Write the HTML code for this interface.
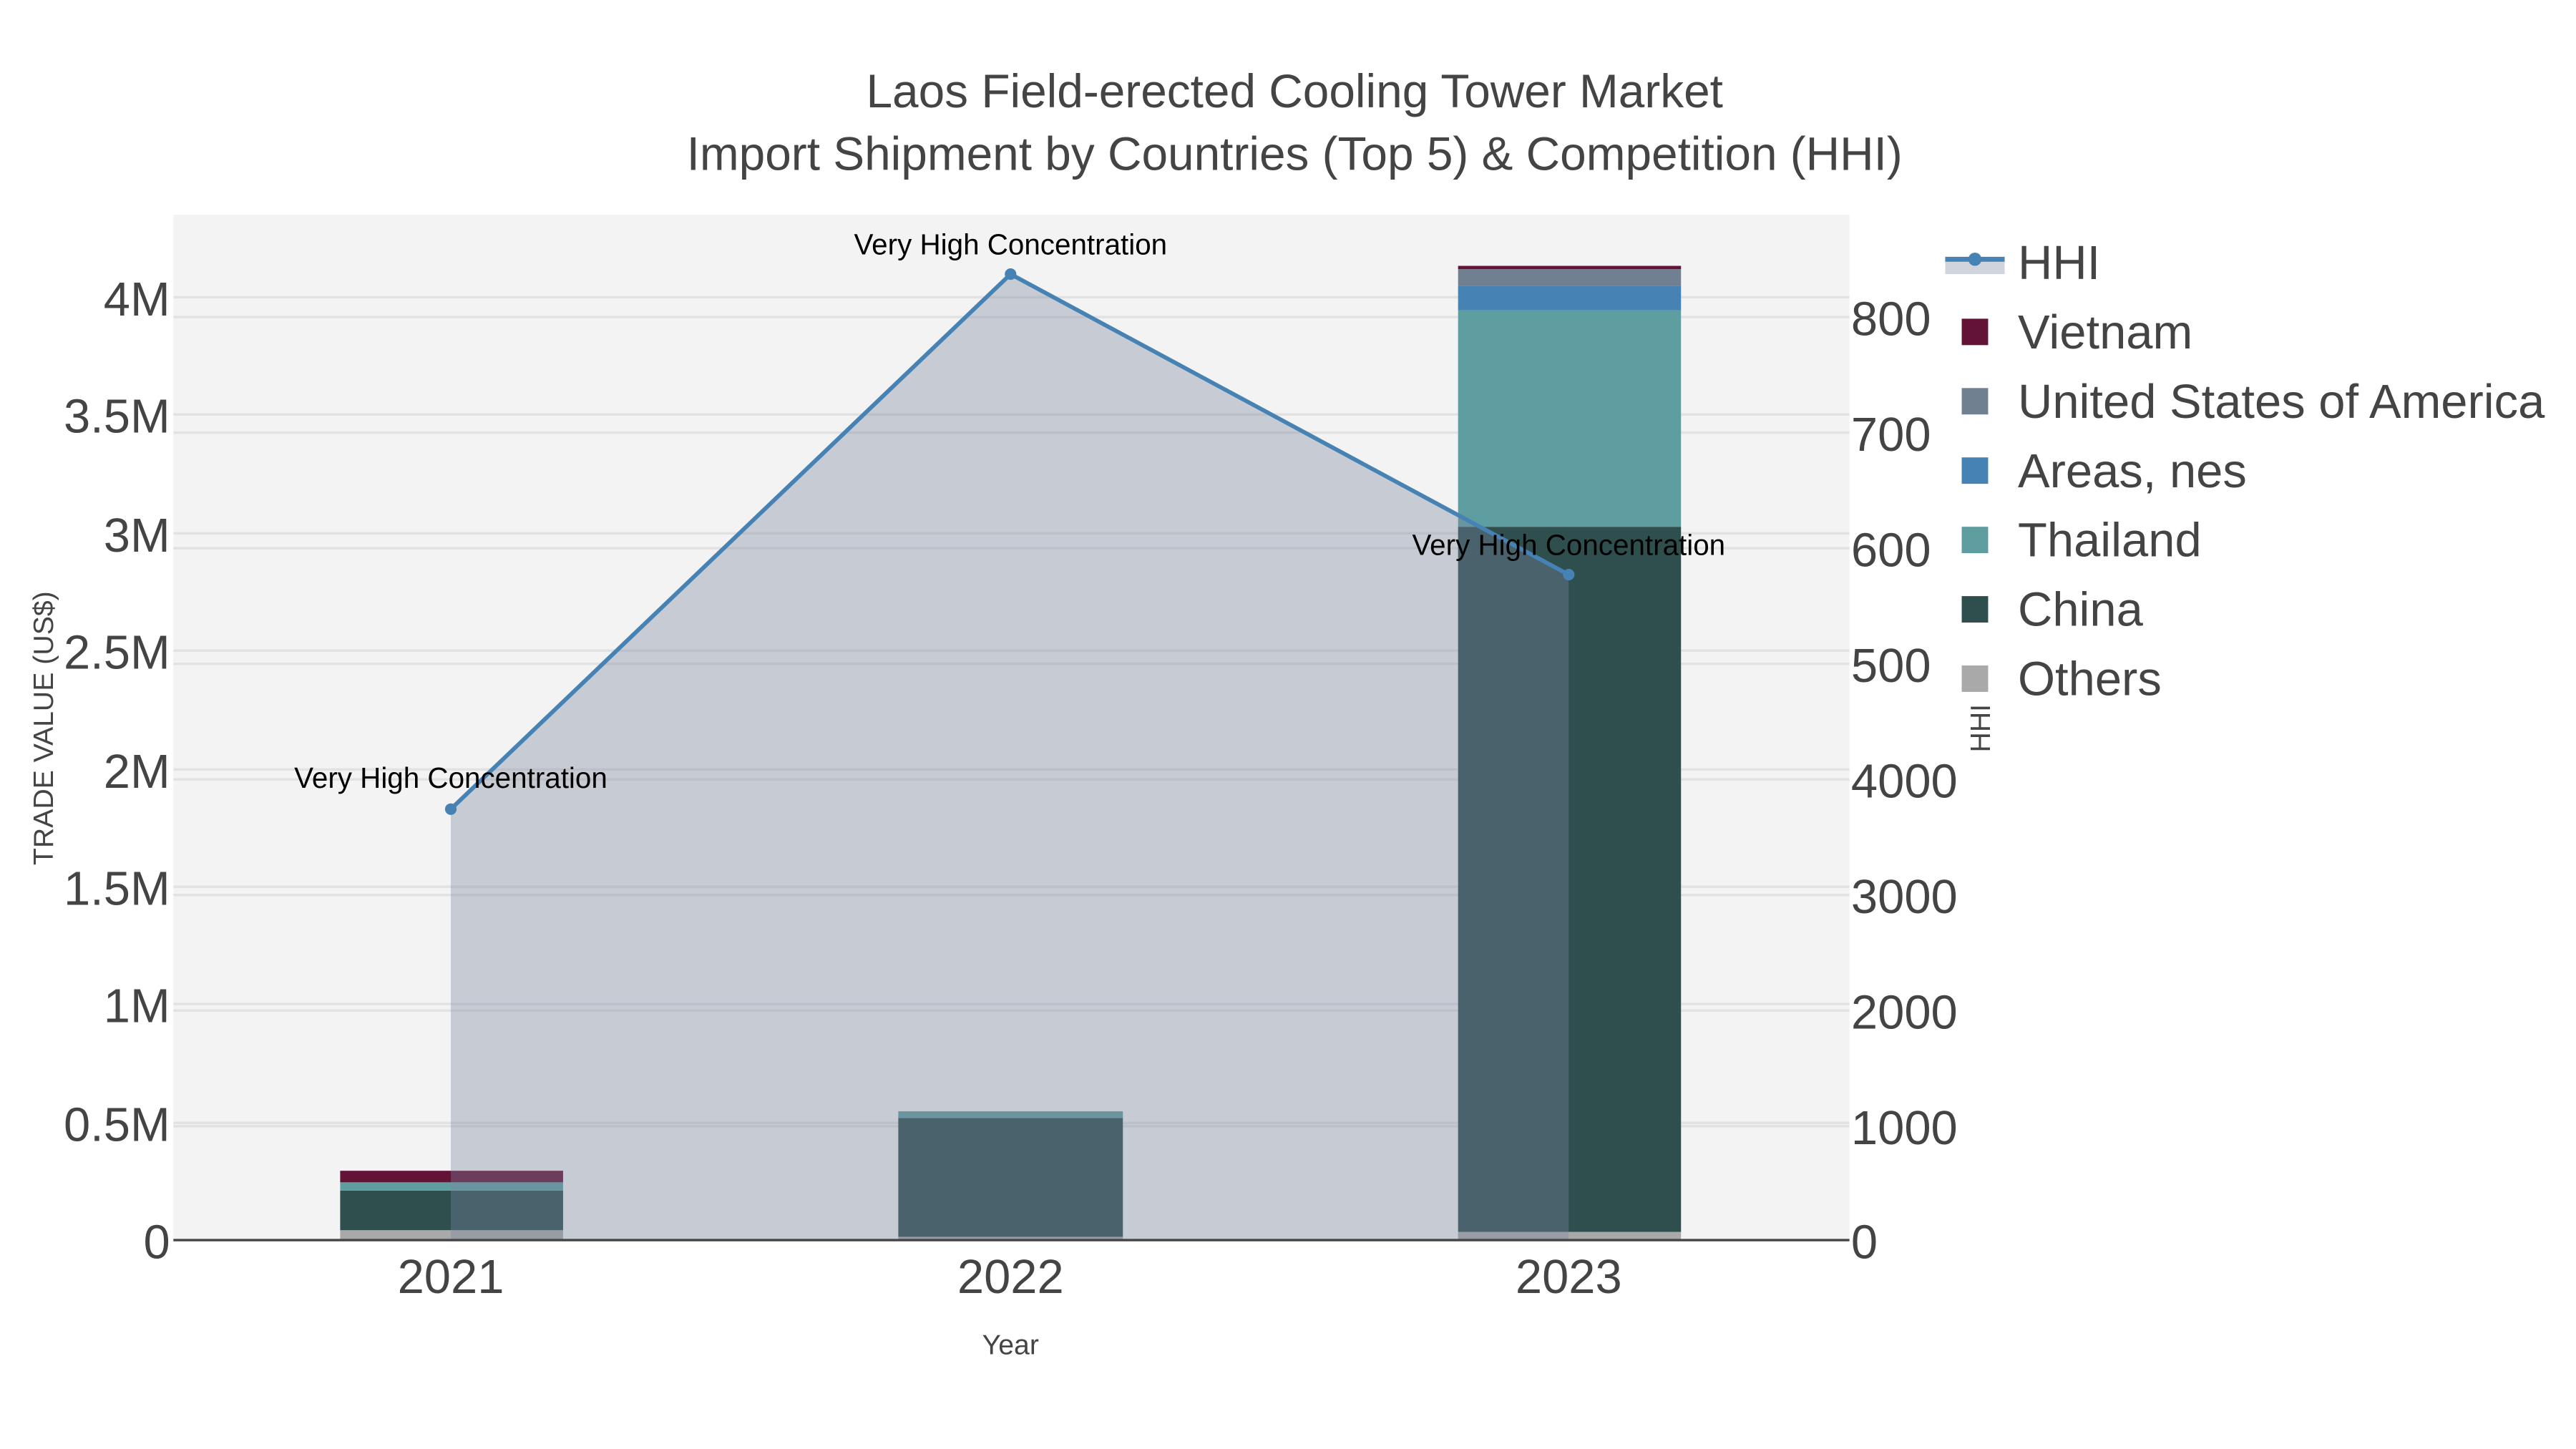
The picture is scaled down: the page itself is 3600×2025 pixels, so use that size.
<!DOCTYPE html>
<html><head><meta charset="utf-8"><style>
html,body{margin:0;padding:0;background:#fff;}
svg{display:block;}
text{font-family:"Liberation Sans",Arial,sans-serif;}
</style></head><body>
<svg width="3600" height="2025" viewBox="0 0 1560 877.5" xmlns="http://www.w3.org/2000/svg">
<rect x="0" y="0" width="1560" height="877.5" fill="#fff"/>
<rect x="105" y="130" width="1015" height="621" fill="#f3f3f3"/>
<g stroke="#e2e2e2" stroke-width="1.5">
<line x1="105" y1="680" x2="1120" y2="680"/><line x1="105" y1="608" x2="1120" y2="608"/>
<line x1="105" y1="537" x2="1120" y2="537"/><line x1="105" y1="466" x2="1120" y2="466"/>
<line x1="105" y1="394" x2="1120" y2="394"/><line x1="105" y1="323" x2="1120" y2="323"/>
<line x1="105" y1="251" x2="1120" y2="251"/><line x1="105" y1="180" x2="1120" y2="180"/>
<line x1="105" y1="682" x2="1120" y2="682"/><line x1="105" y1="612" x2="1120" y2="612"/>
<line x1="105" y1="542" x2="1120" y2="542"/><line x1="105" y1="472" x2="1120" y2="472"/>
<line x1="105" y1="402" x2="1120" y2="402"/><line x1="105" y1="332" x2="1120" y2="332"/>
<line x1="105" y1="262" x2="1120" y2="262"/><line x1="105" y1="192" x2="1120" y2="192"/>
</g>
<rect x="206" y="745" width="135" height="6" fill="#a9a9a9"/>
<rect x="206" y="721" width="135" height="24" fill="#2f4f4f"/>
<rect x="206" y="716" width="135" height="5" fill="#5f9ea0"/>
<rect x="206" y="709" width="135" height="7" fill="#631336"/>
<rect x="544" y="749" width="136" height="2" fill="#a9a9a9"/>
<rect x="544" y="677" width="136" height="72" fill="#2f4f4f"/>
<rect x="544" y="673" width="136" height="4" fill="#5f9ea0"/>
<rect x="883" y="746" width="135" height="5" fill="#a9a9a9"/>
<rect x="883" y="319" width="135" height="427" fill="#2f4f4f"/>
<rect x="883" y="188" width="135" height="131" fill="#5f9ea0"/>
<rect x="883" y="173" width="135" height="15" fill="#4682b4"/>
<rect x="883" y="163" width="135" height="10" fill="#708090"/>
<rect x="883" y="161" width="135" height="2" fill="#631336"/>
<polygon points="273,490 612,166 950,348 950,751 273,751" fill="rgb(123,134,159)" fill-opacity="0.36"/>
<polyline points="273,490 612,166 950,348" fill="none" stroke="#4682b4" stroke-width="2.5"/>
<circle cx="273" cy="490" r="3.5" fill="#4682b4"/><circle cx="612" cy="166" r="3.5" fill="#4682b4"/><circle cx="950" cy="348" r="3.5" fill="#4682b4"/>
<line x1="105" y1="751" x2="1120" y2="751" stroke="#444" stroke-width="1.5"/>
<g font-size="17.5" fill="#000" text-anchor="middle">
<text x="273" y="477">Very High Concentration</text>
<text x="612" y="154">Very High Concentration</text>
<text x="950" y="336">Very High Concentration</text>
</g>
<g font-size="28.5" fill="#444" text-anchor="middle">
<text x="784" y="65">Laos Field-erected Cooling Tower Market</text>
<text x="784" y="103">Import Shipment by Countries (Top 5) &amp; Competition (HHI)</text>
</g>
<g font-size="29" fill="#444" text-anchor="end">
<text x="103" y="762">0</text><text x="103" y="691">0.5M</text><text x="103" y="619">1M</text>
<text x="103" y="548">1.5M</text><text x="103" y="477">2M</text><text x="103" y="405">2.5M</text>
<text x="103" y="334">3M</text><text x="103" y="262">3.5M</text><text x="103" y="191">4M</text>
</g>
<g font-size="29" fill="#444">
<text x="1121" y="762">0</text><text x="1121" y="693">1000</text><text x="1121" y="623">2000</text>
<text x="1121" y="553">3000</text><text x="1121" y="483">4000</text><text x="1121" y="413">500</text>
<text x="1121" y="343">600</text><text x="1121" y="273">700</text><text x="1121" y="203">800</text>
</g>
<g font-size="29" fill="#444" text-anchor="middle">
<text x="273" y="783">2021</text><text x="612" y="783">2022</text><text x="950" y="783">2023</text>
</g>
<text x="612" y="820" font-size="17" fill="#444" text-anchor="middle">Year</text>
<text transform="translate(32,441) rotate(-90)" font-size="17" fill="#444" text-anchor="middle">TRADE VALUE (US$)</text>
<text transform="translate(1205,441) rotate(-90)" font-size="17" fill="#444" text-anchor="middle">HHI</text>
<rect x="1178" y="158" width="36" height="8" fill="#d0d4dc"/>
<line x1="1178" y1="157" x2="1214" y2="157" stroke="#4682b4" stroke-width="3"/>
<circle cx="1196" cy="157" r="4" fill="#4682b4"/>
<rect x="1188" y="193" width="16" height="16" fill="#631336"/>
<rect x="1188" y="235" width="16" height="16" fill="#708090"/>
<rect x="1188" y="277" width="16" height="16" fill="#4682b4"/>
<rect x="1188" y="319" width="16" height="16" fill="#5f9ea0"/>
<rect x="1188" y="361" width="16" height="16" fill="#2f4f4f"/>
<rect x="1188" y="403" width="16" height="16" fill="#a9a9a9"/>
<g font-size="29" fill="#444">
<text x="1222" y="169">HHI</text><text x="1222" y="211">Vietnam</text>
<text x="1222" y="253">United States of America</text><text x="1222" y="295">Areas, nes</text>
<text x="1222" y="337">Thailand</text><text x="1222" y="379">China</text><text x="1222" y="421">Others</text>
</g>
</svg>
</body></html>
